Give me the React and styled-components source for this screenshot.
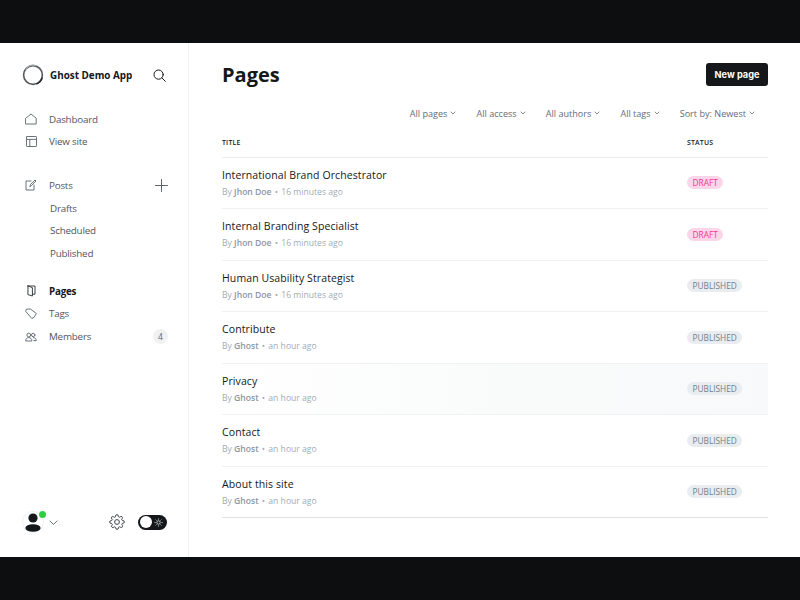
import React from "react";
import styled, { createGlobalStyle } from "styled-components";

const Global = createGlobalStyle`
  html, body { margin: 0; padding: 0; background: #0d0e10; }
  body { font-family: "Open Sans", "Noto Sans", sans-serif; }
  #root { width: 800px; height: 600px; }
`;
const Page = styled.div`
  width: 800px; height: 600px; box-sizing: border-box; padding: 43px 0; background: #0d0e10;
`;
const Shell = styled.div`
  height: 514px; background: #fff; display: flex;
`;
const Side = styled.aside`
  width: 189px; box-sizing: border-box; border-right: 1px solid #eff1f3; padding: 21px 20px 23px 22px;
  display: flex; flex-direction: column;
`;
const Brand = styled.div`
  display: flex; align-items: center; height: 22px; margin-bottom: 22px; padding-right: 2px;
`;
const BrandName = styled.span`
  font-size: 9.9px; font-weight: 700; color: #15171a; margin-left: 6px; flex: 1; white-space: nowrap;
`;
const NavGroup = styled.div`
  display: flex; flex-direction: column; margin-bottom: ${p => p.$gap || 0}px;
`;
const NavRow = styled.div`
  height: 22.6px; display: flex; align-items: center; font-size: 9.8px; letter-spacing: -.2px; padding-left: 3px;
  color: ${p => p.$active ? "#15171a" : "#4f5560"}; font-weight: ${p => p.$active ? 700 : 400};
`;
const NavIcon = styled.span`
  width: 12px; height: 12px; margin-right: 12px; display: flex; align-items: center; justify-content: center; color: #6b727d;
  ${p => p.$active && "color:#3a3e45;"}
`;
const NavLabel = styled.span`flex: 1;`;
const SubRow = styled(NavRow)`
  padding-left: 28px;
`;
const Count = styled.span`
  width: 15px; height: 15px; border-radius: 50%; background: #eff1f3; color: #5d6470; font-size: 8.5px; letter-spacing: 0;
  display: flex; align-items: center; justify-content: center;
`;
const Foot = styled.div`
  margin-top: auto; display: flex; align-items: center; height: 24px;
`;
const Avatar = styled.div`
  position: relative; width: 22px; height: 22px; border-radius: 50%; border: 1px solid #f0f1f3; box-sizing: border-box;
  display: flex; align-items: center; justify-content: center; overflow: visible;
`;
const Online = styled.span`
  position: absolute; top: -1px; right: -3px; width: 7px; height: 7px; border-radius: 50%; background: #30cf43;
`;
const Chev = styled.span`
  margin-left: 5px; display: flex; color: #6b727d;
`;
const Spacer = styled.div`flex: 1;`;
const Toggle = styled.div`
  width: 29px; height: 15px; border-radius: 8px; background: #15171a; margin-left: 13px; position: relative;
  display: flex; align-items: center; justify-content: flex-end; padding-right: 4px; box-sizing: border-box; margin-right: 1px;
`;
const Knob = styled.span`
  position: absolute; left: 2px; top: 1.5px; width: 12px; height: 12px; border-radius: 50%; background: #fff;
`;
const Main = styled.main`
  flex: 1; padding: 19px 32px 0 33px; min-width: 0;
`;
const Head = styled.div`
  display: flex; justify-content: space-between; align-items: center; height: 25px;
`;
const Title = styled.h1`
  margin: 0; font-size: 20px; line-height: 25px; font-weight: 700; color: #15171a;
`;
const NewBtn = styled.button`
  border: 0; background: #15171a; color: #fff; font: 700 9.2px "Inter", sans-serif; height: 23px; width: 62px; border-radius: 3px; padding: 0;
`;
const Filters = styled.div`
  display: flex; justify-content: flex-end; gap: 20px; padding-right: 13px; margin-top: 18px; height: 16px; align-items: center;
`;
const Filter = styled.span`
  font-size: 9.1px; color: #626d79; display: flex; align-items: center; gap: 3px; white-space: nowrap;
`;
const TableHead = styled.div`
  display: flex; align-items: center; height: 36.5px; border-bottom: 1px solid #e9ebee;
  font-size: 6.9px; font-weight: 600; color: #15171a; box-sizing: border-box; padding-top: 7px; letter-spacing: .2px;
`;
const ColTitle = styled.div`flex: 1; min-width: 0;`;
const ColStatus = styled.div`width: 81px; display: flex; align-items: center;`;
const Row = styled.div`
  height: 51.5px; box-sizing: border-box; display: flex; align-items: center;
  border-bottom: 1px solid ${p => p.$last ? "#dfe1e5" : "#eff1f3"};
  background: ${p => p.$hover ? "linear-gradient(90deg,#fff 0%,#f9fafa 55%,#f8f9fa 100%)" : "#fff"};
`;
const RowTitle = styled.div`
  font-size: 10.5px; font-weight: 500; color: #15171a; line-height: 14px; letter-spacing: .1px;
`;
const Meta = styled.div`
  font-size: 8.6px; color: #a3abb5; line-height: 12px; margin-top: 4px;
  & b { font-weight: 600; color: #8e969f; }
`;
const Dot = styled.span`
  margin: 0 1px;
`;
const Badge = styled.span`
  font-size: 8.3px; line-height: 13px; height: 13px; padding: 0 5.5px; border-radius: 7px;
  background: ${p => p.$draft ? "#fcd6e8" : "#eaedf0"}; color: ${p => p.$draft ? "#f5359a" : "#6f7f90"};
`;

const S = { fill: "none", stroke: "currentColor", strokeWidth: 1, strokeLinecap: "round", strokeLinejoin: "round" };
const Chevron = () => <svg width="6" height="6" viewBox="0 0 6 6" {...S} strokeWidth=".8"><path d="M1 2l2 2 2-2" /></svg>;
const Ring = () => <svg width="22" height="22" viewBox="0 0 22 22" fill="none"><circle cx="11" cy="11" r="9.4" stroke="#55585c" strokeWidth="1.6" /><path d="M3.5 5.5a9.8 9.8 0 0 1 11-3.8" stroke="#a5aaaf" strokeWidth="1.1" /><path d="M20.4 13.5a9.8 9.8 0 0 1-6 6.6" stroke="#26282b" strokeWidth="1.2" /></svg>;
const Search = () => <svg width="13" height="13" viewBox="0 0 13 13" {...S} stroke="#15171a"><circle cx="5.6" cy="5.6" r="4.6" /><path d="M9 9l3.3 3.3" /></svg>;
const Home = () => <svg width="12" height="12" viewBox="0 0 12 12" {...S}><path d="M.8 5.2L6 1l5.2 4.2V11H.8z" /></svg>;
const Layout = () => <svg width="11" height="11" viewBox="0 0 11 11" {...S}><rect x=".5" y=".5" width="10" height="10" rx=".6" /><path d="M.5 3.4h10M3.8 3.4v7.1" /></svg>;
const Pen = () => <svg width="12" height="12" viewBox="0 0 12 12" {...S}><path d="M6 2H1v9h8V6" /><path d="M5 7.5l.5-2L10 1l1 1-4.5 4.5z" /></svg>;
const Book = () => <svg width="11" height="12" viewBox="0 0 11 12" {...S} strokeWidth="1"><path d="M2 1h7v8.2H6.4" /><path d="M2 1l-.1 8.6L6.4 11V2.6L2 1z" /></svg>;
const Tag = () => <svg width="12" height="12" viewBox="0 0 12 12" {...S}><path d="M.8 3l.4-1.6L3 1h2.4l6 4.5-2.2 3.6-2 1.2z" /></svg>;
const Users = () => <svg width="12" height="10" viewBox="0 0 12 10" {...S}><circle cx="3.8" cy="3" r="1.9" /><path d="M.7 8.6c0-1.8 1.3-3 3.1-3s3.1 1.2 3.1 3z" /><circle cx="8.2" cy="3" r="1.7" /><path d="M8.4 5.6c1.7 0 2.9 1.2 2.9 3H8.8" /></svg>;
const Plus = () => <svg width="13" height="13" viewBox="0 0 13 13" {...S} stroke="#5d6470"><path d="M6.5 .5v12M.5 6.5h12" /></svg>;
const Person = () => <svg width="16" height="20" viewBox="0 0 16 20" fill="#15171a"><circle cx="8" cy="6" r="4.6" /><ellipse cx="8" cy="16" rx="7.6" ry="3.8" /></svg>;
const Gear = () => <svg width="16" height="16" viewBox="0 0 24 24" fill="none" stroke="#3f444c" strokeWidth="1.5" strokeLinejoin="round"><circle cx="12" cy="12" r="3.6" /><path d="M19.4 15a1.65 1.65 0 0 0 .33 1.82l.06.06a2 2 0 1 1-2.83 2.83l-.06-.06a1.65 1.65 0 0 0-2.82 1.17V21a2 2 0 1 1-4 0v-.09a1.65 1.65 0 0 0-2.8-1.18l-.06.06a2 2 0 1 1-2.83-2.83l.06-.06a1.65 1.65 0 0 0-1.17-2.82H3a2 2 0 1 1 0-4h.09a1.65 1.65 0 0 0 1.18-2.8l-.06-.06a2 2 0 1 1 2.83-2.83l.06.06a1.65 1.65 0 0 0 2.8-1.17V3a2 2 0 1 1 4 0v.09a1.65 1.65 0 0 0 2.82 1.17l.06-.06a2 2 0 1 1 2.83 2.83l-.06.06a1.65 1.65 0 0 0 1.17 2.82H21a2 2 0 1 1 0 4h-.09a1.65 1.65 0 0 0-1.51 1.09z" /></svg>;
const Sun = () => <svg width="9" height="9" viewBox="0 0 9 9" fill="none" stroke="#fff" strokeWidth=".7"><circle cx="4.5" cy="4.5" r="1.7" /><path d="M4.5.4v1.2M4.5 7.4v1.2M.4 4.5h1.2M7.4 4.5h1.2M1.6 1.6l.9.9M6.5 6.5l.9.9M1.6 7.4l.9-.9M6.5 2.5l.9-.9" /></svg>;

const rows = [
  ["International Brand Orchestrator", "Jhon Doe", "16 minutes ago", "DRAFT"],
  ["Internal Branding Specialist", "Jhon Doe", "16 minutes ago", "DRAFT"],
  ["Human Usability Strategist", "Jhon Doe", "16 minutes ago", "PUBLISHED"],
  ["Contribute", "Ghost", "an hour ago", "PUBLISHED"],
  ["Privacy", "Ghost", "an hour ago", "PUBLISHED"],
  ["Contact", "Ghost", "an hour ago", "PUBLISHED"],
  ["About this site", "Ghost", "an hour ago", "PUBLISHED"],
];
const filters = ["All pages", "All access", "All authors", "All tags", "Sort by: Newest"];

export default function App() {
  return (
    <Page>
      <Global />
      <Shell>
        <Side>
          <Brand><Ring /><BrandName>Ghost Demo App</BrandName><Search /></Brand>
          <NavGroup $gap={21}>
            <NavRow><NavIcon><Home /></NavIcon><NavLabel>Dashboard</NavLabel></NavRow>
            <NavRow><NavIcon><Layout /></NavIcon><NavLabel>View site</NavLabel></NavRow>
          </NavGroup>
          <NavGroup $gap={15.5}>
            <NavRow><NavIcon><Pen /></NavIcon><NavLabel>Posts</NavLabel><Plus /></NavRow>
            <SubRow>Drafts</SubRow>
            <SubRow>Scheduled</SubRow>
            <SubRow>Published</SubRow>
          </NavGroup>
          <NavGroup>
            <NavRow $active><NavIcon $active><Book /></NavIcon><NavLabel>Pages</NavLabel></NavRow>
            <NavRow><NavIcon><Tag /></NavIcon><NavLabel>Tags</NavLabel></NavRow>
            <NavRow><NavIcon><Users /></NavIcon><NavLabel>Members</NavLabel><Count>4</Count></NavRow>
          </NavGroup>
          <Foot>
            <Avatar><Person /><Online /></Avatar>
            <Chev><svg width="9" height="9" viewBox="0 0 9 9" {...S}><path d="M1 3l3.5 3.5L8 3" /></svg></Chev>
            <Spacer />
            <Gear />
            <Toggle><Knob /><Sun /></Toggle>
          </Foot>
        </Side>
        <Main>
          <Head><Title>Pages</Title><NewBtn>New page</NewBtn></Head>
          <Filters>{filters.map(f => <Filter key={f}>{f}<Chevron /></Filter>)}</Filters>
          <TableHead><ColTitle>TITLE</ColTitle><ColStatus>STATUS</ColStatus></TableHead>
          {rows.map((r, i) => (
            <Row key={r[0]} $hover={r[0] === "Privacy"} $last={i === rows.length - 1}>
              <ColTitle>
                <RowTitle>{r[0]}</RowTitle>
                <Meta>By <b>{r[1]}</b> <Dot>•</Dot> {r[2]}</Meta>
              </ColTitle>
              <ColStatus><Badge $draft={r[3] === "DRAFT"}>{r[3]}</Badge></ColStatus>
            </Row>
          ))}
        </Main>
      </Shell>
    </Page>
  );
}
